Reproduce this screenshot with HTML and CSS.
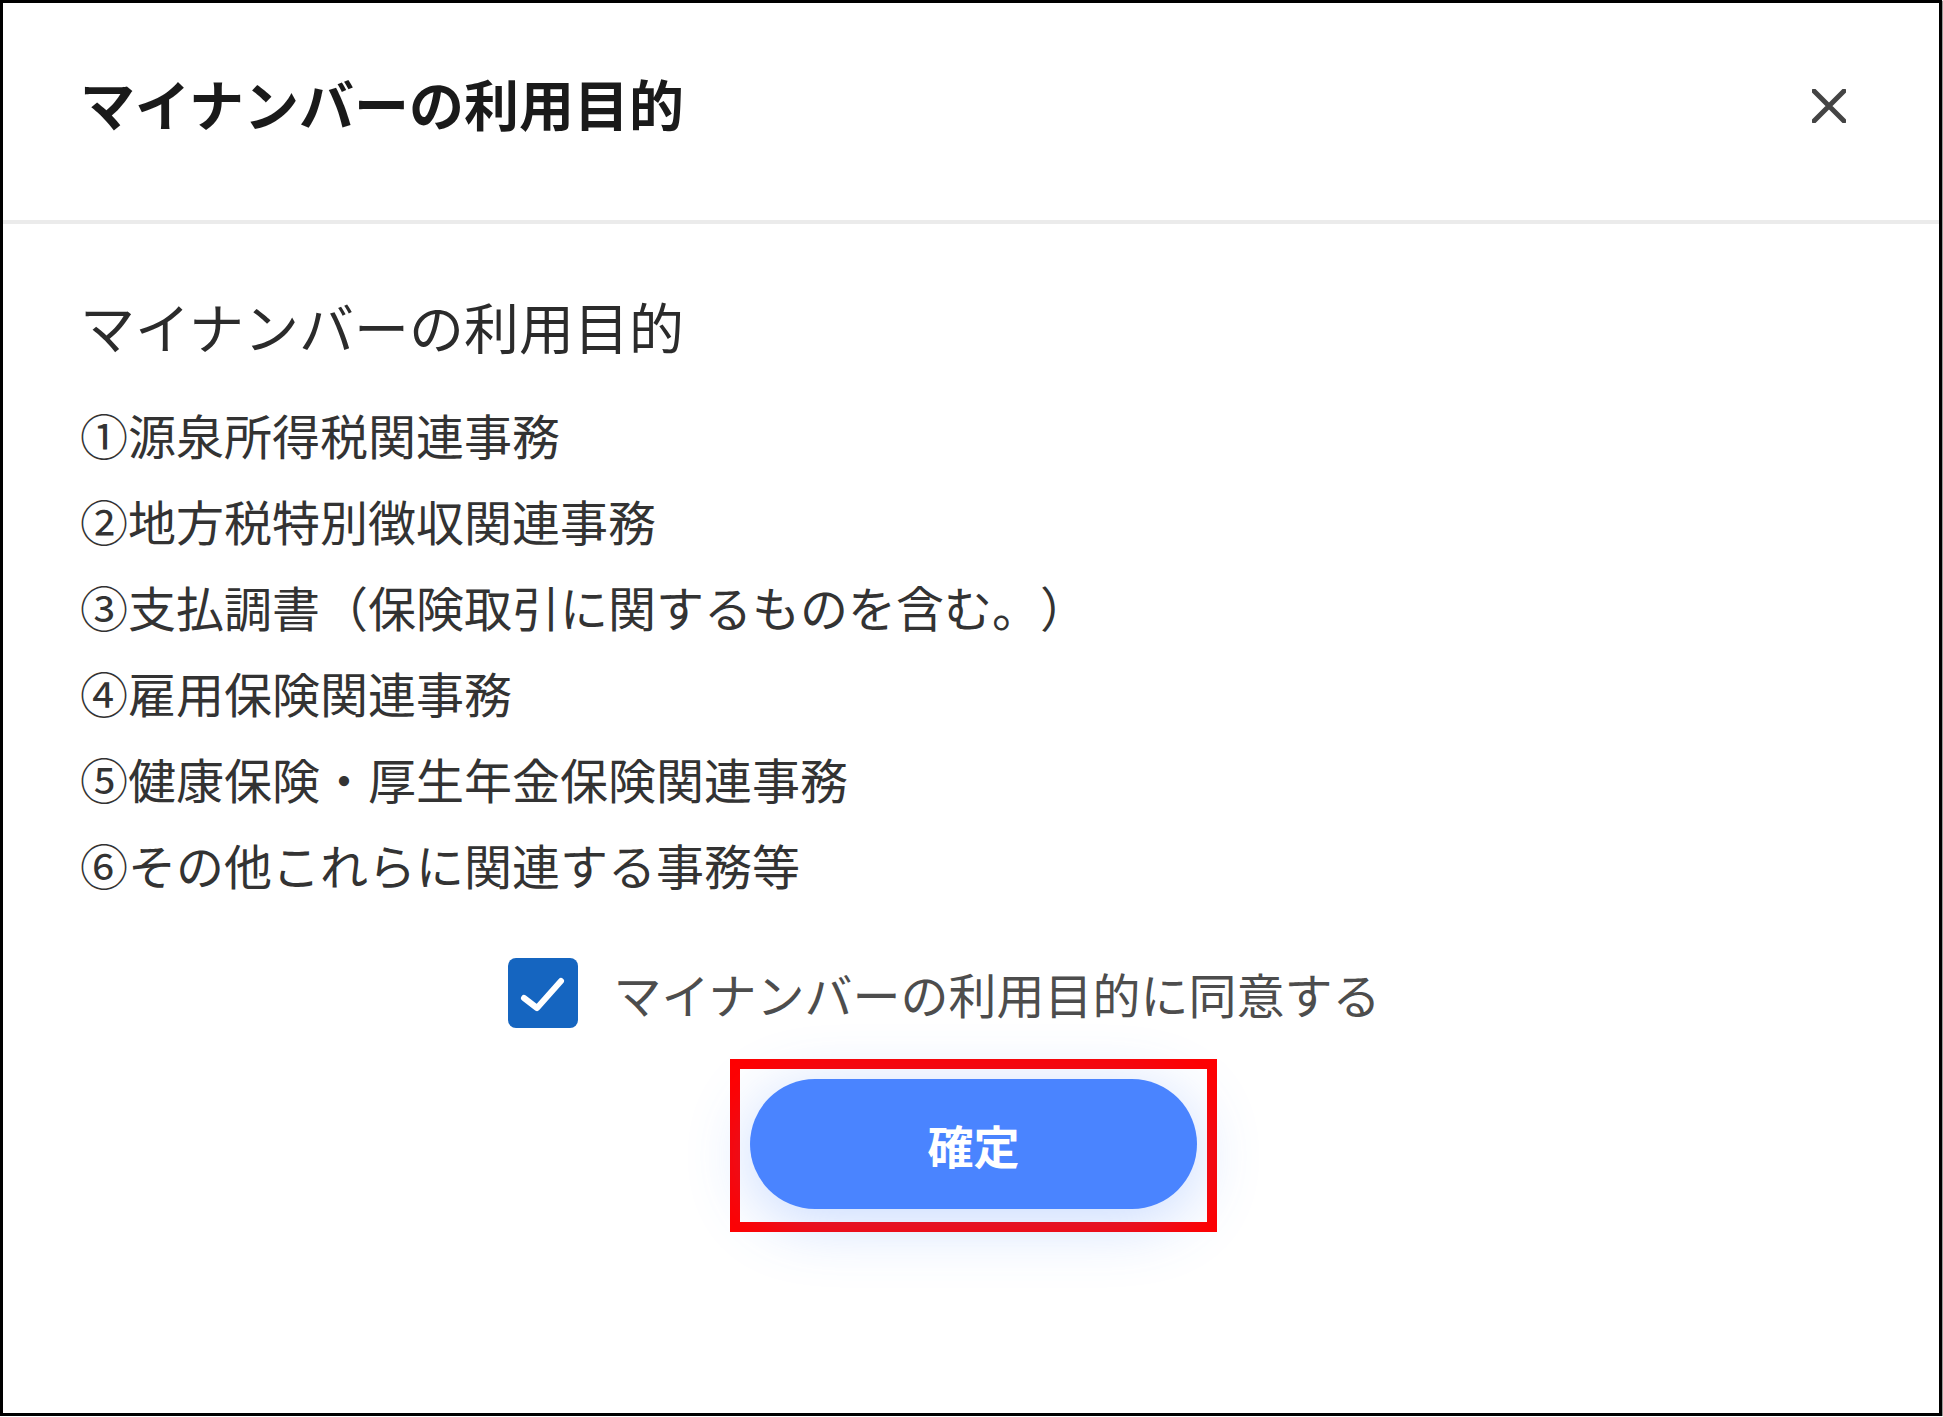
FILE: index.html
```html
<!DOCTYPE html>
<html lang="ja">
<head>
<meta charset="utf-8">
<title>マイナンバーの利用目的</title>
<link rel="stylesheet" href="styles.css">
</head>
<body>
<div class="dialog">
  <header class="dialog-header">
    <h1 class="dialog-title">マイナンバーの利用目的</h1>
    <button class="close-btn" aria-label="閉じる">
      <svg viewBox="0 0 34 34" width="34" height="34"><path d="M2 2 L32 32 M32 2 L2 32" stroke="#444" stroke-width="5" stroke-linecap="round" fill="none"/></svg>
    </button>
  </header>
  <main class="dialog-body">
    <h2 class="subtitle">マイナンバーの利用目的</h2>
    <ul class="purpose-list">
      <li>①源泉所得税関連事務</li>
      <li>②地方税特別徴収関連事務</li>
      <li>③支払調書（保険取引に関するものを含む。）</li>
      <li>④雇用保険関連事務</li>
      <li>⑤健康保険・厚生年金保険関連事務</li>
      <li>⑥その他これらに関連する事務等</li>
    </ul>
    <label class="agree-row">
      <span class="checkbox">
        <svg viewBox="0 0 70 70" width="70" height="70"><path d="M16 40 L29 50 L53 23" stroke="#fff" stroke-width="6" stroke-linecap="round" stroke-linejoin="round" fill="none"/></svg>
      </span>
      <span class="agree-text">マイナンバーの利用目的に同意する</span>
    </label>
    <div class="highlight">
      <button class="confirm-btn">確定</button>
    </div>
  </main>
</div>
</body>
</html>
```
FILE: styles.css
```css
html, body {
  margin: 0;
  padding: 0;
  background: #fff;
}
body {
  font-family: "Noto Sans CJK JP", "Noto Sans", sans-serif;
  text-spacing-trim: space-all;
}
.dialog {
  box-sizing: border-box;
  width: 1942px;
  height: 1416px;
  border: 3px solid #000;
  background: #fff;
  box-shadow: 1px 1px 1px #999;
  display: flex;
  flex-direction: column;
}
.dialog-header {
  box-sizing: border-box;
  height: 221px;
  padding: 0 93px 20px 77px;
  border-bottom: 4px solid #ebebeb;
  display: flex;
  align-items: center;
  justify-content: space-between;
}
.dialog-title {
  margin: 0;
  font-size: 55px;
  font-weight: 700;
  line-height: 70px;
  color: #1a1a1a;
}
.close-btn {
  border: 0;
  background: none;
  padding: 0;
  width: 34px;
  height: 34px;
  display: flex;
  margin-top: 8px;
}
.dialog-body {
  padding: 66px 76px 0 77px;
  display: flex;
  flex-direction: column;
}
.subtitle {
  margin: 0;
  font-size: 55px;
  font-weight: 400;
  line-height: 70px;
  color: #2b2b2b;
}
.purpose-list {
  list-style: none;
  margin: 31px 0 0;
  padding: 0;
}
.purpose-list li {
  font-size: 48px;
  line-height: 86px;
  color: #333;
}
.agree-row {
  margin-top: 51px;
  display: flex;
  align-items: center;
  justify-content: center;
  gap: 35px;
  padding-right: 54px;
}
.checkbox {
  width: 70px;
  height: 70px;
  border-radius: 8px;
  background: #1565c0;
  display: flex;
}
.agree-text {
  font-size: 48px;
  line-height: 70px;
  color: #4d4d4d;
}
.highlight {
  align-self: center;
  margin: 31px 0 0 4px;
  border: 10px solid #ff0000;
  padding: 10px 10px 13px;
  display: flex;
}
.confirm-btn {
  width: 447px;
  height: 130px;
  border: 0;
  border-radius: 65px;
  background: #4a84ff;
  color: #fff;
  font-family: "Noto Sans CJK JP", sans-serif;
  font-size: 46px;
  font-weight: 700;
  padding: 0;
  box-shadow: 0 12px 64px rgba(74, 132, 255, 0.3);
}
```
